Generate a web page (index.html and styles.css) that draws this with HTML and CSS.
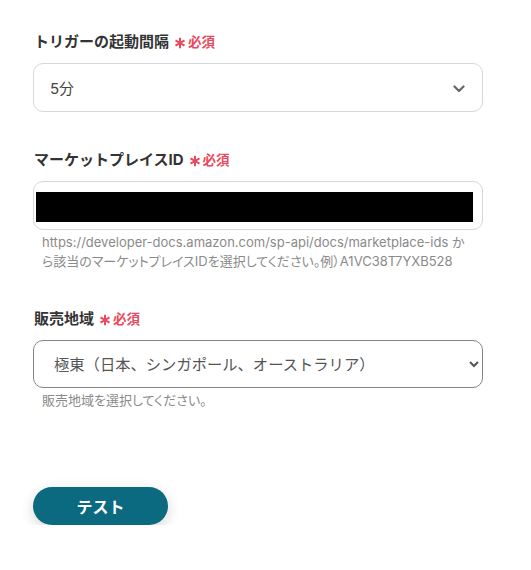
FILE: index.html
```html
<!DOCTYPE html>
<html lang="ja">
<head>
<meta charset="utf-8">
<link rel="stylesheet" href="styles.css">
</head>
<body>
<div class="form">
  <div class="field">
    <div class="label">トリガーの起動間隔<span class="req"><svg class="ast" width="12" height="12" viewBox="0 0 12 12"><path d="M6 0.8 V11.2 M1.5 3.4 L10.5 8.6 M1.5 8.6 L10.5 3.4" stroke="#ea4a5d" stroke-width="2" fill="none"/></svg>必須</span></div>
    <div class="fake-select">
      <span>5分</span>
      <svg class="chev" width="12" height="8" viewBox="0 0 12 8"><path d="M1.5 1.5 L6 6 L10.5 1.5" fill="none" stroke="#666" stroke-width="2.2" stroke-linecap="round" stroke-linejoin="round"/></svg>
    </div>
  </div>
  <div class="field">
    <div class="label">マーケットプレイスID<span class="req"><svg class="ast" width="12" height="12" viewBox="0 0 12 12"><path d="M6 0.8 V11.2 M1.5 3.4 L10.5 8.6 M1.5 8.6 L10.5 3.4" stroke="#ea4a5d" stroke-width="2" fill="none"/></svg>必須</span></div>
    <div class="input"><div class="redact"></div></div>
    <p class="help">https://developer-docs.amazon.com/sp-api/docs/marketplace-ids から該当のマーケットプレイスIDを選択してください。例）A1VC38T7YXB528</p>
  </div>
  <div class="field">
    <div class="label">販売地域<span class="req"><svg class="ast" width="12" height="12" viewBox="0 0 12 12"><path d="M6 0.8 V11.2 M1.5 3.4 L10.5 8.6 M1.5 8.6 L10.5 3.4" stroke="#ea4a5d" stroke-width="2" fill="none"/></svg>必須</span></div>
    <select class="native">
      <option>極東（日本、シンガポール、オーストラリア）</option>
    </select>
    <p class="help">販売地域を選択してください。</p>
  </div>
  <button class="btn">テスト</button>
</div>
</body>
</html>
```

FILE: styles.css
```css
* { box-sizing: border-box; }
html, body { margin: 0; padding: 0; background: #fff; }
body {
  font-family: "Inter", "Noto Sans CJK JP", sans-serif;
  color: #333;
}
.form {
  width: 450px;
  margin-left: 33px;
  padding-top: 30px;
}
.field { margin-bottom: 36px; }
.field:nth-child(3) { margin-bottom: 0; }
.label {
  font-size: 15px;
  font-weight: 700;
  line-height: 24px;
  height: 24px;
  margin-bottom: 9px;
  display: flex;
  align-items: center;
  padding-left: 1px;
  color: #333;
}
.req {
  color: #ea4a5d;
  font-size: 13.5px;
  font-weight: 700;
  margin-left: 5px;
  display: inline-flex;
  align-items: center;
}
.ast {
  margin-right: 2px;
  margin-top: 2px;
}
.fake-select {
  height: 49px;
  border: 1px solid #d4d7de;
  border-radius: 10px;
  display: flex;
  align-items: center;
  justify-content: space-between;
  padding: 0 17px 0 16px;
  font-size: 15px;
  color: #444;
}
.chev { margin-top: 2px; }
.input {
  height: 49px;
  border: 1px solid #d4d7de;
  border-radius: 10px;
  padding: 10px 9px 0 2px;
}
.redact {
  height: 30px;
  background: #000;
}
.help {
  margin: 3px 0 0 9px;
  font-size: 13px;
  line-height: 19px;
  color: #8a8a8a;
  padding-right: 12px;
  font-feature-settings: "palt";
}
.native {
  display: block;
  width: 450px;
  height: 48px;
  border: 1px solid #858585;
  border-radius: 10px;
  background: #fff;
  font-family: "Inter", "Noto Sans CJK JP", sans-serif;
  font-size: 15.3px;
  color: #555;
  padding: 0 8px 0 16px;
}
.btn {
  margin-top: 77px;
  width: 135px;
  height: 38px;
  border: none;
  border-radius: 19px;
  background: #0c6a80;
  color: #fff;
  font-family: "Inter", "Noto Sans CJK JP", sans-serif;
  font-size: 16px;
  font-weight: 700;
  box-shadow: 0 4px 14px rgba(0, 0, 0, 0.16);
}
```
